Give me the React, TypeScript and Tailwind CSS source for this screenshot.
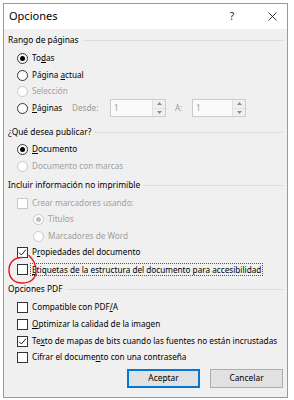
import React from "react";

const FONT = { fontFamily: '"Noto Sans", "Segoe UI", sans-serif' };

function Radio({ checked, disabled }: { checked?: boolean; disabled?: boolean }) {
  return (
    <span
      className={`flex items-center justify-center w-[11px] h-[11px] rounded-full border bg-white shrink-0 ${
        disabled ? "border-[#c8c8c8]" : "border-[#333333]"
      }`}
    >
      {checked && (
        <span className={`w-[5px] h-[5px] rounded-full ${disabled ? "bg-[#bcbcbc]" : "bg-black"}`} />
      )}
    </span>
  );
}

function Check({ checked, disabled }: { checked?: boolean; disabled?: boolean }) {
  return (
    <span
      className={`flex items-center justify-center w-[11px] h-[11px] border bg-white shrink-0 ${
        disabled ? "border-[#c8c8c8]" : "border-[#333333]"
      }`}
    >
      {checked && (
        <svg width="9" height="9" viewBox="0 0 9 9">
          <path d="M1 4.6 L3.4 7 L8 1.6" fill="none" stroke="#222" strokeWidth="1" />
        </svg>
      )}
    </span>
  );
}

function Header({ children, mt }: { children: React.ReactNode; mt: string }) {
  return (
    <div className={`flex items-center h-[16px] pl-[4px] pr-[4px] gap-[4px] ${mt}`}>
      <span className="text-[8.4px] text-black whitespace-nowrap">{children}</span>
      <span className="flex-1 h-px bg-[#dcdcdc]" />
    </div>
  );
}

function Row({
  children,
  mt,
  indent,
  disabled,
}: {
  children: React.ReactNode;
  mt: string;
  indent?: boolean;
  disabled?: boolean;
}) {
  return (
    <div
      className={`flex items-center h-[16px] gap-[4px] ${indent ? "pl-[29px]" : "pl-[13px]"} ${mt} text-[8.2px] whitespace-nowrap ${
        disabled ? "text-[#a0a0a0]" : "text-black"
      }`}
    >
      {children}
    </div>
  );
}

function Spin({ w }: { w: string }) {
  return (
    <span className={`flex h-[18px] ${w} border border-[#cccccc] bg-[#fafafa] shrink-0`}>
      <span className="flex-1 text-[8.2px] text-[#a0a0a0] pl-[3px] leading-[16px]">1</span>
      <span className="flex flex-col w-[13px] border-l border-[#e0e0e0]">
        <span className="flex-1 flex items-center justify-center bg-[#f0f0f0] border-b border-[#e0e0e0]">
          <svg width="5" height="3" viewBox="0 0 5 3">
            <path d="M0 3 L2.5 0 L5 3 Z" fill="#8a8a8a" />
          </svg>
        </span>
        <span className="flex-1 flex items-center justify-center bg-[#f0f0f0]">
          <svg width="5" height="3" viewBox="0 0 5 3">
            <path d="M0 0 L2.5 3 L5 0 Z" fill="#8a8a8a" />
          </svg>
        </span>
      </span>
    </span>
  );
}

export default function App() {
  return (
    <div className="relative w-[294px] h-[400px] bg-white overflow-hidden" style={FONT}>
      <div className="ml-[3px] mt-[3px] w-[285px] h-[395px] border border-[#9a9a9a] bg-[#f0f0f0] flex flex-col relative">
        {/* title bar */}
        <div className="h-[25px] bg-white flex items-center pl-[5px] pr-[10px] shrink-0">
          <span className="text-[11px] text-black flex-1">Opciones</span>
          <span className="text-[10px] text-[#222] mr-[34px]">?</span>
          <svg width="9" height="9" viewBox="0 0 9 9">
            <path d="M0.5 0.5 L8.5 8.5 M8.5 0.5 L0.5 8.5" stroke="#222" strokeWidth="0.9" />
          </svg>
        </div>

        <Header mt="mt-[3px]">Rango de páginas</Header>
        <Row mt="mt-[2px]">
          <Radio checked />
          <span>
            To<u>d</u>as
          </span>
        </Row>
        <Row mt="mt-[1px]">
          <Radio />
          <span>
            Página <u>a</u>ctual
          </span>
        </Row>
        <Row mt="mt-[0px]" disabled>
          <Radio disabled />
          <span>Selección</span>
        </Row>
        <Row mt="mt-[1px]">
          <Radio />
          <span className="w-[36px] shrink-0">
            <u>P</u>áginas
          </span>
          <span className="text-[#9a9a9a] w-[34px] shrink-0">Desde:</span>
          <Spin w="w-[56px]" />
          <span className="text-[#9a9a9a] w-[13px] ml-[5px] shrink-0">A:</span>
          <Spin w="w-[54px]" />
        </Row>

        <Header mt="mt-[8px]">¿Qué desea publicar?</Header>
        <Row mt="mt-[1px]">
          <Radio checked />
          <span>
            <u>D</u>ocumento
          </span>
        </Row>
        <Row mt="mt-[1px]" disabled>
          <Radio disabled />
          <span>Documento con marcas</span>
        </Row>

        <Header mt="mt-[3px]">Incluir información no imprimible</Header>
        <Row mt="mt-[2px]" disabled>
          <Check disabled />
          <span>Crear marcadores usando:</span>
        </Row>
        <Row mt="mt-[0px]" indent disabled>
          <Radio checked disabled />
          <span>Títulos</span>
        </Row>
        <Row mt="mt-[1px]" indent disabled>
          <Radio disabled />
          <span>Marcadores de Word</span>
        </Row>
        <Row mt="mt-[0px]">
          <Check checked />
          <span>
            P<u>r</u>opiedades del documento
          </span>
        </Row>
        <Row mt="mt-[1px]">
          <Check />
          <span className="border border-dotted border-[#555] px-[1px] leading-[11px] -ml-[2px]">
            <u>E</u>tiquetas de la estructura del documento para accesibilidad
          </span>
        </Row>

        <Header mt="mt-[4px]">Opciones PDF</Header>
        <Row mt="mt-[2px]">
          <Check />
          <span>
            Compatible con PDF<u>/</u>A
          </span>
        </Row>
        <Row mt="mt-[1px]">
          <Check />
          <span>
            <u>O</u>ptimizar la calidad de la imagen
          </span>
        </Row>
        <Row mt="mt-[1px]">
          <Check checked />
          <span>
            Te<u>x</u>to de mapas de bits cuando las fuentes no están incrustadas
          </span>
        </Row>
        <Row mt="mt-[0px]">
          <Check />
          <span>
            Cifrar el docume<u>n</u>to con una contraseña
          </span>
        </Row>

        <div className="flex justify-end gap-[10px] pr-[4px] mt-[4px]">
          <button className="w-[73px] h-[19px] border border-[#0078d7] bg-[#e1e1e1] text-[8.4px] text-black shadow-[inset_0_0_0_1px_#0078d7]">
            Aceptar
          </button>
          <button className="w-[73px] h-[19px] border border-[#adadad] bg-[#e1e1e1] text-[8.4px] text-black">
            Cancelar
          </button>
        </div>
      </div>

      {/* hand-drawn red circle annotation */}
      <svg className="absolute left-0 top-0 pointer-events-none" width="294" height="400" viewBox="0 0 294 400">
        <path
          d="M22 257.5 C14 257.5, 9 262.5, 9 270 C9 278, 14 283, 22 283 C30 283, 36 279, 36 271 C36 265, 34 260, 29 255.5"
          fill="none"
          stroke="#e8101a"
          strokeWidth="1.4"
          strokeLinecap="round"
        />
      </svg>
    </div>
  );
}
